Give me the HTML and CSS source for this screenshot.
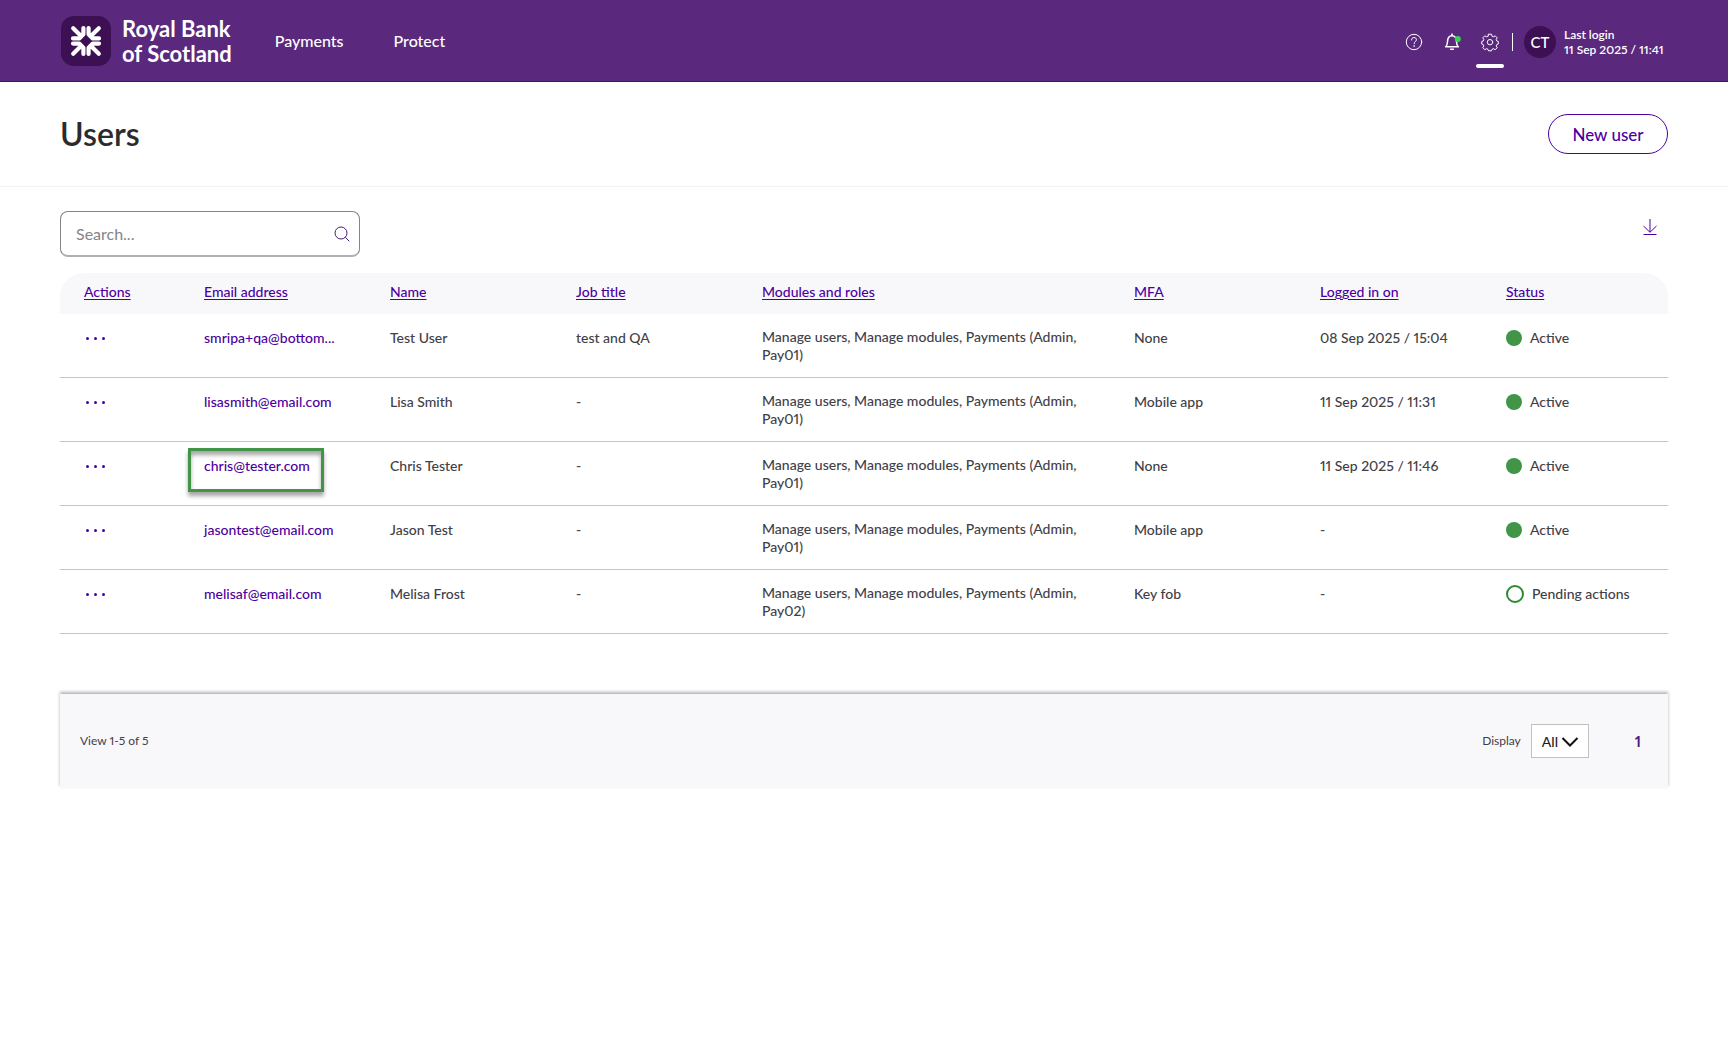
FILE: index.html
```html
<!DOCTYPE html>
<html lang="en">
  <head>
    <meta charset="UTF-8" />
    <meta name="viewport" content="width=device-width, initial-scale=1.0" />
    <title>Users</title>
    <link rel="stylesheet" href="styles.css">
  </head>
  <body>
    <header class="topbar">
      <a class="logo" href="#">
        <svg width="50" height="50" viewBox="0 0 50 50" aria-hidden="true">
          <rect width="50" height="50" rx="13" fill="#3c1053" />
          <g fill="none" stroke="#fff" stroke-width="4.2" stroke-linecap="round" stroke-linejoin="round">
            <path d="M12.2 12.2l7.6 7.6M22.4 12v6.2l-4.200 4.200H12" />
            <path d="M37.8 12.2l-7.6 7.6M27.6 12v6.2l4.200 4.200H38" />
            <path d="M12.2 37.8l7.6-7.6M22.4 38v-6.2l-4.200-4.200H12" />
            <path d="M37.8 37.8l-7.6-7.6M27.6 38v-6.2l4.200-4.200H38" />
          </g>
        </svg>
        <span class="logo-text">Royal Bank<br />of Scotland</span>
      </a>
      <nav class="nav">
        <a href="#">Payments</a>
        <a href="#">Protect</a>
      </nav>
      <div class="tools">
        <button class="icon-btn" aria-label="Help">
          <svg width="18" height="18" viewBox="0 0 18 18">
            <circle cx="9" cy="9" r="7.7" />
            <path d="M6.6 7c0-1.5 1-2.5 2.4-2.5s2.4.9 2.4 2.2c0 1.9-2.3 1.9-2.3 4" />
            <path d="M9.1 12.4v1.2" />
          </svg>
        </button>
        <button class="icon-btn" aria-label="Notifications">
          <svg width="18" height="18" viewBox="0 0 18 18">
            <path class="thick" d="M2.6 13.8c1.4-1 1.8-2.4 1.9-5 .1-3.500 1.600-6 4.500-6s4.400 2.500 4.500 6c.1 2.600.5 4 1.900 5z" />
            <path class="thick" d="M9 1v1.600M7.600 16.200h2.800" />
            <circle class="dot" cx="14.800" cy="6" r="3" />
          </svg>
        </button>
        <button class="icon-btn active" aria-label="Settings">
          <svg width="18" height="18" viewBox="0 0 18 18">
            <path d="M7.500 1.200h3l.5 2 1.400.6 1.800-1 2 2-1 1.800.6 1.400 1.500.5v2.500l-1.500.5-.6 1.400 1 1.800-2 2-1.800-1-1.400.6-.5 1.500h-3l-.5-1.500-1.400-.6-1.800 1-2-2 1-1.800-.6-1.400-1.500-.5V8.500L2.200 8l.6-1.400-1-1.800 2-2 1.800 1L7 3.200z" />
            <circle cx="9" cy="9.200" r="2.700" />
          </svg>
        </button>
        <span class="divider"></span>
        <span class="avatar">CT</span>
        <p class="login">Last login<br />11 Sep 2025 / 11:41</p>
      </div>
    </header>

    <main>
      <section class="page-head">
        <h1>Users</h1>
        <button class="new-user">New user</button>
      </section>

      <section class="content">
        <div class="toolbar">
          <form class="search">
            <input type="search" placeholder="Search..." aria-label="Search" />
            <button type="submit" aria-label="Search">
              <svg width="16" height="16" viewBox="0 0 16 16">
                <circle cx="7" cy="7" r="6" />
                <path d="M11.300 11.300l4 4" />
              </svg>
            </button>
          </form>
          <button class="download" aria-label="Download">
            <svg width="16" height="18" viewBox="0 0 16 18">
              <path d="M8 1v13M1.500 8L8 14.300 14.500 8M1.500 16.500h13" />
            </svg>
          </button>
        </div>

        <table class="users">
          <thead>
            <tr>
              <th class="col-actions"><a href="#">Actions</a></th>
              <th class="col"><a href="#">Email address</a></th>
              <th class="col"><a href="#">Name</a></th>
              <th class="col"><a href="#">Job title</a></th>
              <th><a href="#">Modules and roles</a></th>
              <th class="col"><a href="#">MFA</a></th>
              <th class="col"><a href="#">Logged in on</a></th>
              <th class="col-status"><a href="#">Status</a></th>
            </tr>
          </thead>
          <tbody>
            <tr>
              <td><button class="more" aria-label="Actions"><i></i><i></i><i></i></button></td>
              <td><a href="#">smripa+qa@bottom...</a></td>
              <td>Test User</td>
              <td>test and QA</td>
              <td class="roles">Manage users, Manage modules, Payments (Admin, Pay01)</td>
              <td>None</td>
              <td>08 Sep 2025 / 15:04</td>
              <td><span class="status">Active</span></td>
            </tr>
            <tr>
              <td><button class="more" aria-label="Actions"><i></i><i></i><i></i></button></td>
              <td><a href="#">lisasmith@email.com</a></td>
              <td>Lisa Smith</td>
              <td>-</td>
              <td class="roles">Manage users, Manage modules, Payments (Admin, Pay01)</td>
              <td>Mobile app</td>
              <td>11 Sep 2025 / 11:31</td>
              <td><span class="status">Active</span></td>
            </tr>
            <tr>
              <td><button class="more" aria-label="Actions"><i></i><i></i><i></i></button></td>
              <td class="marked"><a href="#">chris@tester.com</a></td>
              <td>Chris Tester</td>
              <td>-</td>
              <td class="roles">Manage users, Manage modules, Payments (Admin, Pay01)</td>
              <td>None</td>
              <td>11 Sep 2025 / 11:46</td>
              <td><span class="status">Active</span></td>
            </tr>
            <tr>
              <td><button class="more" aria-label="Actions"><i></i><i></i><i></i></button></td>
              <td><a href="#">jasontest@email.com</a></td>
              <td>Jason Test</td>
              <td>-</td>
              <td class="roles">Manage users, Manage modules, Payments (Admin, Pay01)</td>
              <td>Mobile app</td>
              <td>-</td>
              <td><span class="status">Active</span></td>
            </tr>
            <tr>
              <td><button class="more" aria-label="Actions"><i></i><i></i><i></i></button></td>
              <td><a href="#">melisaf@email.com</a></td>
              <td>Melisa Frost</td>
              <td>-</td>
              <td class="roles">Manage users, Manage modules, Payments (Admin, Pay02)</td>
              <td>Key fob</td>
              <td>-</td>
              <td><span class="status pending">Pending actions</span></td>
            </tr>
          </tbody>
        </table>

        <div class="pager">
          <span>View 1-5 of 5</span>
          <div class="pager-right">
            <label for="display">Display</label>
            <div class="select">
              <select id="display">
                <option>All</option>
              </select>
              <svg width="18" height="12" viewBox="0 0 18 12" aria-hidden="true">
                <path d="M1.500 2L9 9.500 16.500 2" />
              </svg>
            </div>
            <a class="page" href="#">1</a>
          </div>
        </div>
      </section>
    </main>
  </body>
</html>
```

FILE: styles.css
```css
*,
*::before,
*::after {
  box-sizing: border-box;
}
body {
  margin: 0;
  font-family: Lato, "Liberation Sans", sans-serif;
  font-size: 14px;
  font-variant-numeric: proportional-nums;
  line-height: 18px;
  color: #424047;
  background-color: #fff;
}
a {
  color: #4c00a0;
  text-decoration: none;
}
button {
  padding: 0;
  border: none;
  background: none;
  font-family: inherit;
  cursor: pointer;
}
svg {
  display: block;
  fill: none;
}

/* header */
.topbar {
  display: flex;
  align-items: center;
  height: 82px;
  padding: 0 60px;
  background-color: #5a287d;
  border-bottom: 1px solid #3f1464;
  color: #fff;
}
.logo {
  display: flex;
  align-items: center;
  gap: 11px;
  padding-left: 1px;
  color: #fff;
}
.logo-text {
  font-size: 22px;
  font-weight: 700;
  line-height: 25px;
}
.nav {
  display: flex;
  gap: 50px;
  margin-left: 43px;
}
.nav a {
  color: #fff;
  font-size: 16px;
  font-weight: 500;
}
.tools {
  display: flex;
  align-items: center;
  margin-left: auto;
  padding-top: 2px;
}
.icon-btn {
  position: relative;
  margin-right: 20px;
}
.icon-btn svg {
  stroke: #fff;
  stroke-width: 1;
  stroke-linejoin: round;
  stroke-linecap: round;
  overflow: visible;
}
.icon-btn .thick {
  stroke-width: 1.5;
}
.icon-btn .dot {
  fill: #30d64c;
  stroke: none;
}
.icon-btn.active {
  margin-right: 13px;
}
/* line under the current section */
.icon-btn.active::after {
  content: "";
  position: absolute;
  left: -5px;
  top: 31px;
  width: 28px;
  height: 4px;
  border-radius: 2px;
  background-color: #fff;
}
.divider {
  width: 1px;
  height: 18px;
  background-color: #fff;
}
.avatar {
  width: 32px;
  height: 32px;
  margin: 0 8px 0 11px;
  border-radius: 50%;
  background-color: #3c1053;
  font-size: 15px;
  font-weight: 500;
  line-height: 32px;
  text-align: center;
}
.login {
  min-width: 104px;
  margin: 0;
  font-size: 12px;
  font-weight: 600;
  line-height: 15px;
}

/* title */
.page-head {
  display: flex;
  align-items: center;
  justify-content: space-between;
  height: 105px;
  padding: 0 60px;
  border-bottom: 1px solid #f2f2f8;
}
h1 {
  margin: 0;
  font-size: 32px;
  font-weight: 600;
  line-height: 40px;
  color: #2b2b2e;
}
.new-user {
  width: 120px;
  height: 40px;
  border: 1px solid #4c00a0;
  border-radius: 20px;
  color: #4c00a0;
  font-size: 17px;
  font-weight: 500;
}

.content {
  padding: 24px 60px;
}
.toolbar {
  display: flex;
  justify-content: space-between;
  margin-bottom: 16px;
}
.search {
  display: flex;
  align-items: center;
  width: 300px;
  height: 46px;
  padding: 0 9px 0 15px;
  border: 1px solid #858585;
  border-bottom: 2px solid #b0b0b0;
  border-radius: 8px;
}
.search input {
  flex: 1;
  min-width: 0;
  padding: 0;
  border: none;
  outline: none;
  font-family: inherit;
  font-size: 16px;
}
.search input::placeholder {
  color: #858585;
}
.search svg {
  stroke: #4c1a80;
  stroke-width: 1;
}
.download {
  align-self: flex-start;
  margin: 7px 10px 0 0;
}
.download svg {
  stroke: #4c00a0;
  stroke-width: 1;
}

/* table */
.users {
  width: 100%;
  table-layout: fixed;
  border-collapse: separate;
  border-spacing: 0;
}
.col-actions {
  width: 144px;
}
.col {
  width: 186px;
}
.col-status {
  width: 162px;
}
th {
  height: 41px;
  padding: 10px 0 0;
  background-color: #f8f8fb;
  font-weight: 500;
  text-align: left;
  vertical-align: top;
}
th:first-child {
  border-top-left-radius: 24px;
}
th:last-child {
  border-top-right-radius: 24px;
}
th:first-child,
td:first-child {
  padding-left: 24px;
}
th a {
  text-decoration: underline;
  text-underline-offset: 2px;
}
td {
  height: 64px;
  padding: 15px 0 0;
  border-bottom: 1px solid #c4c4c6;
  font-weight: 500;
  vertical-align: top;
}
.roles {
  padding-top: 14px;
  padding-right: 40px;
}
.more {
  display: flex;
  align-items: center;
  gap: 5px;
  height: 18px;
  padding-left: 2px;
}
.more i {
  width: 3px;
  height: 3px;
  border-radius: 50%;
  background-color: #4c00a0;
}
.marked {
  position: relative;
}
.marked::after {
  content: "";
  position: absolute;
  left: -16px;
  top: 6px;
  width: 136px;
  height: 44px;
  border: 3px solid #429448;
  box-shadow: 0 4px 4px rgba(0, 0, 0, 0.35), inset 0 4px 4px rgba(0, 0, 0, 0.35);
  pointer-events: none;
}
.status {
  display: flex;
  align-items: center;
  gap: 8px;
}
.status::before {
  content: "";
  width: 16px;
  height: 16px;
  border-radius: 50%;
  background-color: #429448;
}
.status.pending::before {
  width: 18px;
  height: 18px;
  border: 2px solid #2d8a34;
  background-color: #fff;
}

/* pagination */
.pager {
  display: flex;
  align-items: center;
  justify-content: space-between;
  height: 94px;
  margin-top: 60px;
  padding: 0 27px 0 20px;
  background-color: #f8f8fb;
  box-shadow: 0 -2px 3px rgba(0, 0, 0, 0.3);
  font-size: 12px;
}
.pager-right {
  display: flex;
  align-items: center;
}
.select {
  position: relative;
  margin: 0 46px 0 10px;
}
.select select {
  appearance: none;
  width: 58px;
  height: 34px;
  padding: 0 0 0 10px;
  border: 1px solid #c1c1bf;
  border-radius: 0;
  background-color: #fff;
  color: #1c1c1c;
  font-family: inherit;
  font-size: 14px;
  font-weight: 500;
}
.select svg {
  position: absolute;
  right: 10px;
  top: 12px;
  stroke: #111;
  stroke-width: 2;
  pointer-events: none;
}
.page {
  color: #4c1a80;
  font-size: 15px;
  font-weight: 700;
}
```
